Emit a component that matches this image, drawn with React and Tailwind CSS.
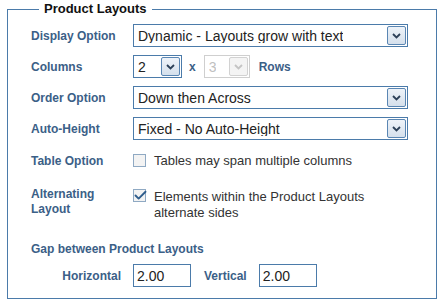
import { Check } from 'lucide-react';

const font = { fontFamily: '"Liberation Sans", Arial, sans-serif' };

function Chevron({ disabled }) {
  return (
    <svg width="9" height="6" viewBox="0 0 9 6" className="block">
      <path
        d="M1 1 L4.5 4.5 L8 1"
        fill="none"
        stroke={disabled ? '#c4c4c4' : '#2c4058'}
        strokeWidth="1.8"
      />
    </svg>
  );
}

function Select({ value, width, disabled }) {
  return (
    <div
      className={`flex items-center justify-between h-[23px] border pl-[4px] pr-[1px] ${
        disabled ? 'border-[#cfcfcf] text-[#c0c0c0]' : 'border-[#4b7baa] text-[#222]'
      } bg-white text-[14px] leading-none`}
      style={{ width }}
    >
      <span className="truncate">{value}</span>
      <div
        className={`flex items-center justify-center w-[19px] h-[19px] rounded-[2px] border ${
          disabled
            ? 'border-[#d2d2d2] bg-[#f4f4f4]'
            : 'border-[#5a86b3] bg-gradient-to-b from-[#eef3f9] to-[#d5e0ec]'
        }`}
      >
        <Chevron disabled={disabled} />
      </div>
    </div>
  );
}

function Checkbox({ checked }) {
  return (
    <div className="relative w-[13px] h-[13px] border border-[#8fa9c3] bg-[#f3f3f3] shrink-0">
      {checked && (
        <Check
          size={15}
          strokeWidth={3}
          className="absolute -top-[2px] -left-[1px] text-[#2f5d8c]"
        />
      )}
    </div>
  );
}

function Label({ children }) {
  return <div className="w-[102px] shrink-0 text-[12px] font-bold text-[#3b6087]">{children}</div>;
}

export default function App() {
  return (
    <div className="w-[444px] h-[303px] bg-white" style={font}>
      <fieldset className="ml-[7px] w-[430px] h-[299px] border border-[#4b7baa] pl-[23px]">
        <legend className="ml-[8px] pl-[5px] pr-[5px] text-[13px] leading-[18px] font-bold text-[#111]">
          Product Layouts
        </legend>

        <div className="flex flex-col pt-[2px]">
          <div className="flex items-center h-[31px]">
            <Label>Display Option</Label>
            <Select value="Dynamic - Layouts grow with text" width={275} />
          </div>

          <div className="flex items-center h-[31px]">
            <Label>Columns</Label>
            <Select value="2" width={49} />
            <span className="ml-[7px] text-[12px] font-bold text-[#3b6087]">x</span>
            <div className="ml-[8px]">
              <Select value="3" width={46} disabled />
            </div>
            <span className="ml-[9px] text-[12px] font-bold text-[#3b6087]">Rows</span>
          </div>

          <div className="flex items-center h-[31px]">
            <Label>Order Option</Label>
            <Select value="Down then Across" width={275} />
          </div>

          <div className="flex items-center h-[31px]">
            <Label>Auto-Height</Label>
            <Select value="Fixed - No Auto-Height" width={275} />
          </div>

          <div className="flex items-center h-[33px]">
            <Label>Table Option</Label>
            <Checkbox />
            <span className="ml-[8px] text-[13px] text-[#333]">Tables may span multiple columns</span>
          </div>

          <div className="flex items-start mt-[10px]">
            <div className="w-[102px] shrink-0 text-[12px] leading-[15px] font-bold text-[#3b6087]">
              Alternating
              <br />
              Layout
            </div>
            <div className="mt-[2px]">
              <Checkbox checked />
            </div>
            <span className="ml-[8px] mt-[2px] text-[13px] leading-[16px] text-[#333]">
              Elements within the Product Layouts
              <br />
              alternate sides
            </span>
          </div>

          <div className="mt-[19px] text-[12px] font-bold text-[#3b6087]">
            Gap between Product Layouts
          </div>

          <div className="flex items-center mt-[6px]">
            <div className="w-[102px] shrink-0 pr-[12px] text-right text-[12px] font-bold text-[#3b6087]">
              Horizontal
            </div>
            <input
              defaultValue="2.00"
              className="w-[58px] h-[23px] border border-[#4b7baa] px-[3px] text-[14px] text-[#222] outline-none"
            />
            <span className="ml-[13px] text-[12px] font-bold text-[#3b6087]">Vertical</span>
            <input
              defaultValue="2.00"
              className="ml-[12px] w-[58px] h-[23px] border border-[#4b7baa] px-[3px] text-[14px] text-[#222] outline-none"
            />
          </div>
        </div>
      </fieldset>
    </div>
  );
}
